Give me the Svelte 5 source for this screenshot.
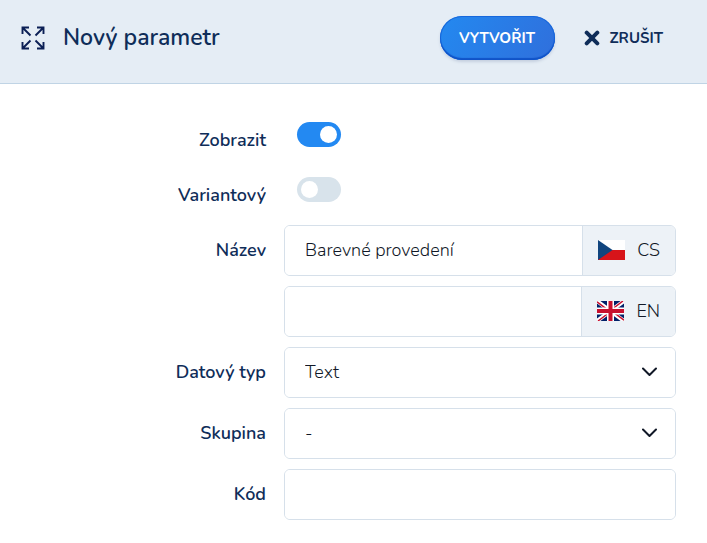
<script>
    let visible = $state(true);
    let variant = $state(false);
    let names = $state({ cs: 'Barevné provedení', en: '' });
    let dataType = $state('Text');
    let group = $state('-');
    let code = $state('');
</script>

<header>
    <button class="expand" type="button" aria-label="Celá obrazovka">
        <svg width="24" height="24" viewBox="0 0 24 24" fill="none" stroke="currentColor" stroke-width="1.9">
            <path d="M1.500 8V1.500H8M1.500 1.500l8 8" />
            <path d="M16 1.500h6.500V8M22.500 1.500l-8 8" />
            <path d="M1.500 16v6.500H8M1.500 22.500l8-8" />
            <path d="M16 22.500h6.500V16M22.500 22.500l-8-8" />
        </svg>
    </button>
    <h1>Nový parametr</h1>
    <button class="create" type="submit" form="parameter">VYTVOŘIT</button>
    <button class="cancel" type="button">
        <svg width="16" height="16" viewBox="0 0 16 16" stroke="currentColor" stroke-width="4" stroke-linecap="round">
            <path d="M2.700 2.700l10.600 10.600M13.300 2.700L2.700 13.300" />
        </svg>
        ZRUŠIT
    </button>
</header>

<form id="parameter" onsubmit={(e) => e.preventDefault()}>
    <div class="row toggle">
        <label for="visible">Zobrazit</label>
        <input id="visible" type="checkbox" role="switch" bind:checked={visible} />
    </div>
    <div class="row toggle">
        <label for="variant">Variantový</label>
        <input id="variant" type="checkbox" role="switch" bind:checked={variant} />
    </div>
    <div class="row">
        <label for="name-cs">Název</label>
        <div class="control">
            <input id="name-cs" type="text" bind:value={names.cs} />
            <span class="lang">
                <svg width="27" height="20" viewBox="0 0 27 20">
                    <path fill="#fff" d="M0 0h27v10H0z" />
                    <path fill="#d7141a" d="M0 10h27v10H0z" />
                    <path fill="#11457e" d="M0 0l14.500 10L0 20z" />
                </svg>
                CS
            </span>
        </div>
    </div>
    <div class="row">
        <span></span>
        <div class="control">
            <input id="name-en" type="text" aria-label="Název EN" bind:value={names.en} />
            <span class="lang">
                <svg width="27" height="20" viewBox="0 0 27 20">
                    <path fill="#012169" d="M0 0h27v20H0z" />
                    <path stroke="#fff" stroke-width="4" d="M0 0l27 20M27 0L0 20" />
                    <path stroke="#c8102e" stroke-width="1.500" d="M0 .8l12 9M27 19.200l-12-9M26 0L14 9M1 20l12-9" />
                    <path stroke="#fff" stroke-width="7" d="M13.500 0v20M0 10h27" />
                    <path stroke="#c8102e" stroke-width="4" d="M13.500 0v20M0 10h27" />
                </svg>
                EN
            </span>
        </div>
    </div>
    <div class="row">
        <label for="type">Datový typ</label>
        <div class="control">
            <select id="type" bind:value={dataType}>
                <option>Text</option>
            </select>
            <svg class="chevron" width="16" height="10" viewBox="0 0 16 10" fill="none" stroke="currentColor" stroke-width="2">
                <path d="M2 1.500L8.500 8 15 1.500" stroke-linecap="round" stroke-linejoin="round" />
            </svg>
        </div>
    </div>
    <div class="row">
        <label for="group">Skupina</label>
        <div class="control">
            <select id="group" bind:value={group}>
                <option>-</option>
            </select>
            <svg class="chevron" width="16" height="10" viewBox="0 0 16 10" fill="none" stroke="currentColor" stroke-width="2">
                <path d="M2 1.500L8.500 8 15 1.500" stroke-linecap="round" stroke-linejoin="round" />
            </svg>
        </div>
    </div>
    <div class="row">
        <label for="code">Kód</label>
        <div class="control">
            <input id="code" type="text" bind:value={code} />
        </div>
    </div>
</form>

<style>
    :global(body) {
        margin: 0;
        background: #fff;
        color: #0f2d59;
        font-family: Nunito, "Open Sans", "Noto Sans", sans-serif;
    }
    button, input, select {
        font-family: inherit;
        color: inherit;
    }
    header {
        display: flex;
        align-items: center;
        box-sizing: border-box;
        height: 84px;
        padding: 0 44px 8px 21px;
        background: #e5edf5;
        border-bottom: 1px solid #c0d4e5;
    }
    button {
        border: 0;
        padding: 0;
        background: none;
        cursor: pointer;
    }
    .expand {
        display: flex;
        color: #0b1f55;
    }
    h1 {
        flex: 1;
        margin: 0 0 0 18px;
        font-size: 23px;
        line-height: 30px;
        font-weight: 600;
    }
    .create {
        width: 115px;
        height: 44px;
        border-radius: 22px;
        background: linear-gradient(120deg, #2389f0, #306fdc);
        box-shadow: inset 0 -2px 1px #1053c8, inset 0 0 0 1px #1768dc, 0 2px 3px #c4cfdf;
        color: #fff;
        font-size: 15px;
        font-weight: 700;
    }
    .cancel {
        display: flex;
        align-items: center;
        gap: 10px;
        margin-left: 29px;
        font-size: 15px;
        font-weight: 700;
    }
    form {
        display: grid;
        gap: 10px;
        padding: 31px;
    }
    .row {
        display: grid;
        grid-template-columns: 235px 1fr;
        column-gap: 18px;
        height: 51px;
    }
    .row.toggle {
        height: 45px;
    }
    label {
        font-size: 18px;
        line-height: 50px;
        font-weight: 600;
        text-align: right;
    }
    .toggle input {
        appearance: none;
        display: flex;
        box-sizing: border-box;
        width: 44px;
        height: 25px;
        margin: 7px 13px;
        padding: 4px;
        border-radius: 13px;
        background: #d8e3eb;
        cursor: pointer;
    }
    .toggle input::before {
        content: "";
        width: 17px;
        height: 17px;
        border-radius: 50%;
        background: #fff;
    }
    .toggle input:checked {
        justify-content: flex-end;
        background: #2389f2;
    }
    .control {
        display: flex;
        position: relative;
        box-sizing: border-box;
        min-width: 0;
        border: 1px solid #d6e0ea;
        border-radius: 6px;
        overflow: hidden;
        color: #111827;
    }
    .control input, .control select {
        appearance: none;
        flex: 1;
        min-width: 0;
        border: 0;
        outline: none;
        padding: 0 20px 2px;
        background: #fff;
        font-size: 18px;
        font-weight: 300;
    }
    .control:focus-within {
        border-color: #2389f2;
    }
    .lang {
        display: flex;
        align-items: center;
        gap: 12px;
        padding: 0 15px 2px;
        border-left: 1px solid #d6e0ea;
        background: #edf2f7;
        font-size: 18px;
        font-weight: 300;
    }
    .chevron {
        position: absolute;
        top: 19px;
        right: 18px;
        pointer-events: none;
    }
</style>
